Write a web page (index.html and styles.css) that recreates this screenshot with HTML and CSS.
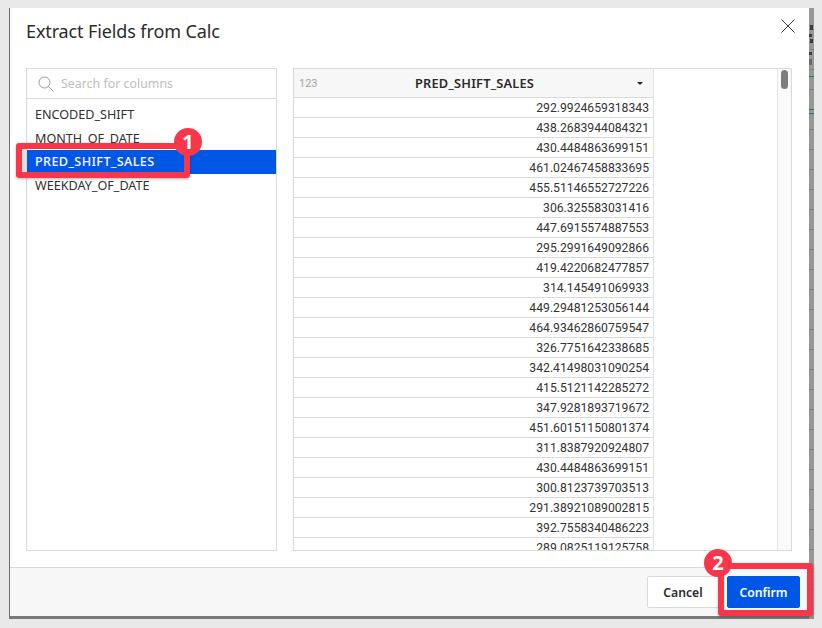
FILE: index.html
```html
<!DOCTYPE html>
<html lang="en">
<head>
<meta charset="utf-8">
<title>Extract Fields from Calc</title>
<link rel="stylesheet" href="styles.css">
</head>
<body>
<div class="dialog">
  <header class="head">
    <h1 class="title">Extract Fields from Calc</h1>
    <svg class="close" viewBox="0 0 14 14" width="14" height="14"><path d="M.5.5l13 13M13.500.5l-13 13" fill="none" stroke="#333" stroke-width="1"/></svg>
  </header>
  <main class="body">
    <section class="picker">
      <div class="search">
        <svg class="mag" viewBox="0 0 16 16" width="16" height="16"><circle cx="6.500" cy="6.500" r="5.500" fill="none" stroke="#999" stroke-width="1"/><path d="M10.500 10.500l5 5" stroke="#999" stroke-width="1"/></svg>
        <span class="placeholder">Search for columns</span>
      </div>
      <ul class="cols">
        <li>ENCODED_SHIFT</li>
        <li>MONTH_OF_DATE</li>
        <li class="sel">PRED_SHIFT_SALES</li>
        <li>WEEKDAY_OF_DATE</li>
      </ul>
    </section>
    <section class="table">
      <div class="tcol">
        <div class="thead"><span class="ttype">123</span><span class="tname">PRED_SHIFT_SALES</span><span class="caret"></span></div>
        <div class="cell">292.9924659318343</div>
        <div class="cell">438.2683944084321</div>
        <div class="cell">430.4484863699151</div>
        <div class="cell">461.02467458833695</div>
        <div class="cell">455.51146552727226</div>
        <div class="cell">306.325583031416</div>
        <div class="cell">447.6915574887553</div>
        <div class="cell">295.2991649092866</div>
        <div class="cell">419.4220682477857</div>
        <div class="cell">314.145491069933</div>
        <div class="cell">449.29481253056144</div>
        <div class="cell">464.93462860759547</div>
        <div class="cell">326.7751642338685</div>
        <div class="cell">342.41498031090254</div>
        <div class="cell">415.5121142285272</div>
        <div class="cell">347.9281893719672</div>
        <div class="cell">451.60151150801374</div>
        <div class="cell">311.8387920924807</div>
        <div class="cell">430.4484863699151</div>
        <div class="cell">300.8123739703513</div>
        <div class="cell">291.38921089002815</div>
        <div class="cell">392.7558340486223</div>
        <div class="cell">289.0825119125758</div>
      </div>
      <div class="track"><div class="thumb"></div></div>
    </section>
  </main>
  <footer class="foot">
    <button class="btn cancel">Cancel</button>
    <button class="btn confirm">Confirm</button>
  </footer>
</div>
<div class="band">
  <i class="mark m1"></i><i class="mark m2"></i><i class="mark m3"></i><i class="mark m4"></i><i class="mark m5"></i>
  <i class="teal t1"></i><i class="teal t2"></i><i class="teal t3"></i>
</div>
<div class="hl hl1"></div>
<div class="badge b1">1</div>
<div class="hl hl2"></div>
<div class="badge b2">2</div>
</body>
</html>
```
FILE: styles.css
```css
* { box-sizing: border-box; }
html, body { margin: 0; height: 100%; }
body {
  width: 822px; height: 628px; overflow: hidden; position: relative;
  background: #e9e9e9;
  font-family: "Noto Sans", "Open Sans", sans-serif;
  padding: 8px 8px 9px 9px;
  display: flex;
  align-items: stretch;
}
.dialog {
  width: 800px; height: 611px; flex: none;
  background: #fff;
  display: flex; flex-direction: column;
  border-left: 1px solid #6f6f6f;
  border-bottom: 3px solid #7a7a7a;
}
.band {
  width: 5px; height: 611px; flex: none; position: relative;
  background: #979797 repeating-linear-gradient(to bottom, transparent 0, transparent 19px, #7f7f7f 19px, #7f7f7f 20px);
  background-position: 0 2px;
}
.mark { position: absolute; left: 1px; background: #3c3c3c; width: 3px; }
.m1 { top: 17px; height: 5px; }
.m2 { top: 26px; height: 3px; left: 0; }
.m3 { top: 31px; height: 4px; }
.m4 { top: 44px; height: 3px; left: 0; }
.m5 { top: 51px; height: 6px; left: 0; background: #6a6a6a; }
.teal { position: absolute; left: 0; width: 5px; height: 1px; background: #2b6a86; }
.t1 { top: 68px; }
.t2 { top: 101px; }
.t3 { top: 105px; }
.head { height: 60px; flex: none; position: relative; padding: 12px 0 0 16px; }
.title { margin: 0; font-size: 18px; font-weight: 400; color: #2a2a2a; line-height: 22px; letter-spacing: -.12px; }
.close { position: absolute; right: 14px; top: 11px; }
.body { flex: 1; display: flex; padding: 0 17px 16px 16px; gap: 16px; min-height: 0; }
.picker { width: 251px; border: 1px solid #d9d9d9; flex: none; }
.search { height: 30px; border-bottom: 1px solid #d9d9d9; display: flex; align-items: center; padding-left: 11px; gap: 7px; }
.placeholder { font-size: 12.400px; color: #bdbdbd; }
.cols { list-style: none; margin: 0; padding: 4px 0 0; }
.cols li { height: 23.700px; line-height: 23px; padding-left: 8px; font-size: 12.600px; color: #2f2f2f; }
.cols li.sel { background: #0057e6; color: #fff; font-weight: 500; letter-spacing: .4px; }
.table { flex: 1; border: 1px solid #d9d9d9; display: flex; overflow: hidden; min-width: 0; }
.tcol { width: 360px; flex: none; border-right: 1px solid #e2e2e2; }
.thead { height: 29px; background: #f7f7f7; border-bottom: 1px solid #d9d9d9; display: flex; align-items: center; position: relative; padding: 0 10px 0 5px; font-size: 12.800px; }
.ttype { font-family: Roboto, sans-serif; font-size: 11px; color: #a3a3a3; }
.tname { position: absolute; left: 121px; font-weight: 600; color: #2a2a2a; letter-spacing: .2px; }
.caret { margin-left: auto; border: 3.500px solid transparent; border-top: 3.500px solid #222; border-bottom: 0; }
.cell { height: 20px; border-bottom: 1px solid #d9d9d9; text-align: right; padding-right: 4px; font-family: Roboto, sans-serif; font-size: 12.200px; line-height: 20px; color: #333; }
.track { margin-left: auto; width: 14px; border-left: 1px solid #e6e6e6; background: #fafafa; flex: none; padding: 1px 0 0 3px; }
.thumb { width: 7px; height: 19px; border-radius: 3.500px; background: #7e7e7e; }
.foot { height: 49px; flex: none; background: #f7f7f7; border-top: 1px solid #d9d9d9; display: flex; justify-content: flex-end; align-items: flex-start; gap: 8px; padding: 8px 9px 0 0; }
.btn { height: 32px; border-radius: 2px; font-family: inherit; font-size: 12.200px; font-weight: 600; padding: 0; }
.cancel { width: 72px; background: #fff; border: 1px solid #d9d9d9; color: #2a2a2a; }
.confirm { width: 73px; background: #0057e6; border: 1px solid #0057e6; color: #fff; }
.hl { position: absolute; border: 6px solid #f9374b; border-radius: 3px; box-shadow: 0 1px 3px rgba(0,0,0,.3); }
.hl1 { left: 16px; top: 143px; width: 174px; height: 35px; }
.hl1::before { content: ""; position: absolute; left: 0; top: 0; width: 5px; height: 23px; background: #e0e0e0; }
.hl2 { left: 718px; top: 563px; width: 95px; height: 53px; }
.badge { position: absolute; width: 28px; height: 28px; border-radius: 50%; background: #f9374b; color: #fff; font-family: "Open Sans", sans-serif; font-weight: 700; font-size: 20px; line-height: 28px; text-align: center; }
.b1 { left: 174px; top: 128px; }
.b2 { left: 704px; top: 549px; }
```
